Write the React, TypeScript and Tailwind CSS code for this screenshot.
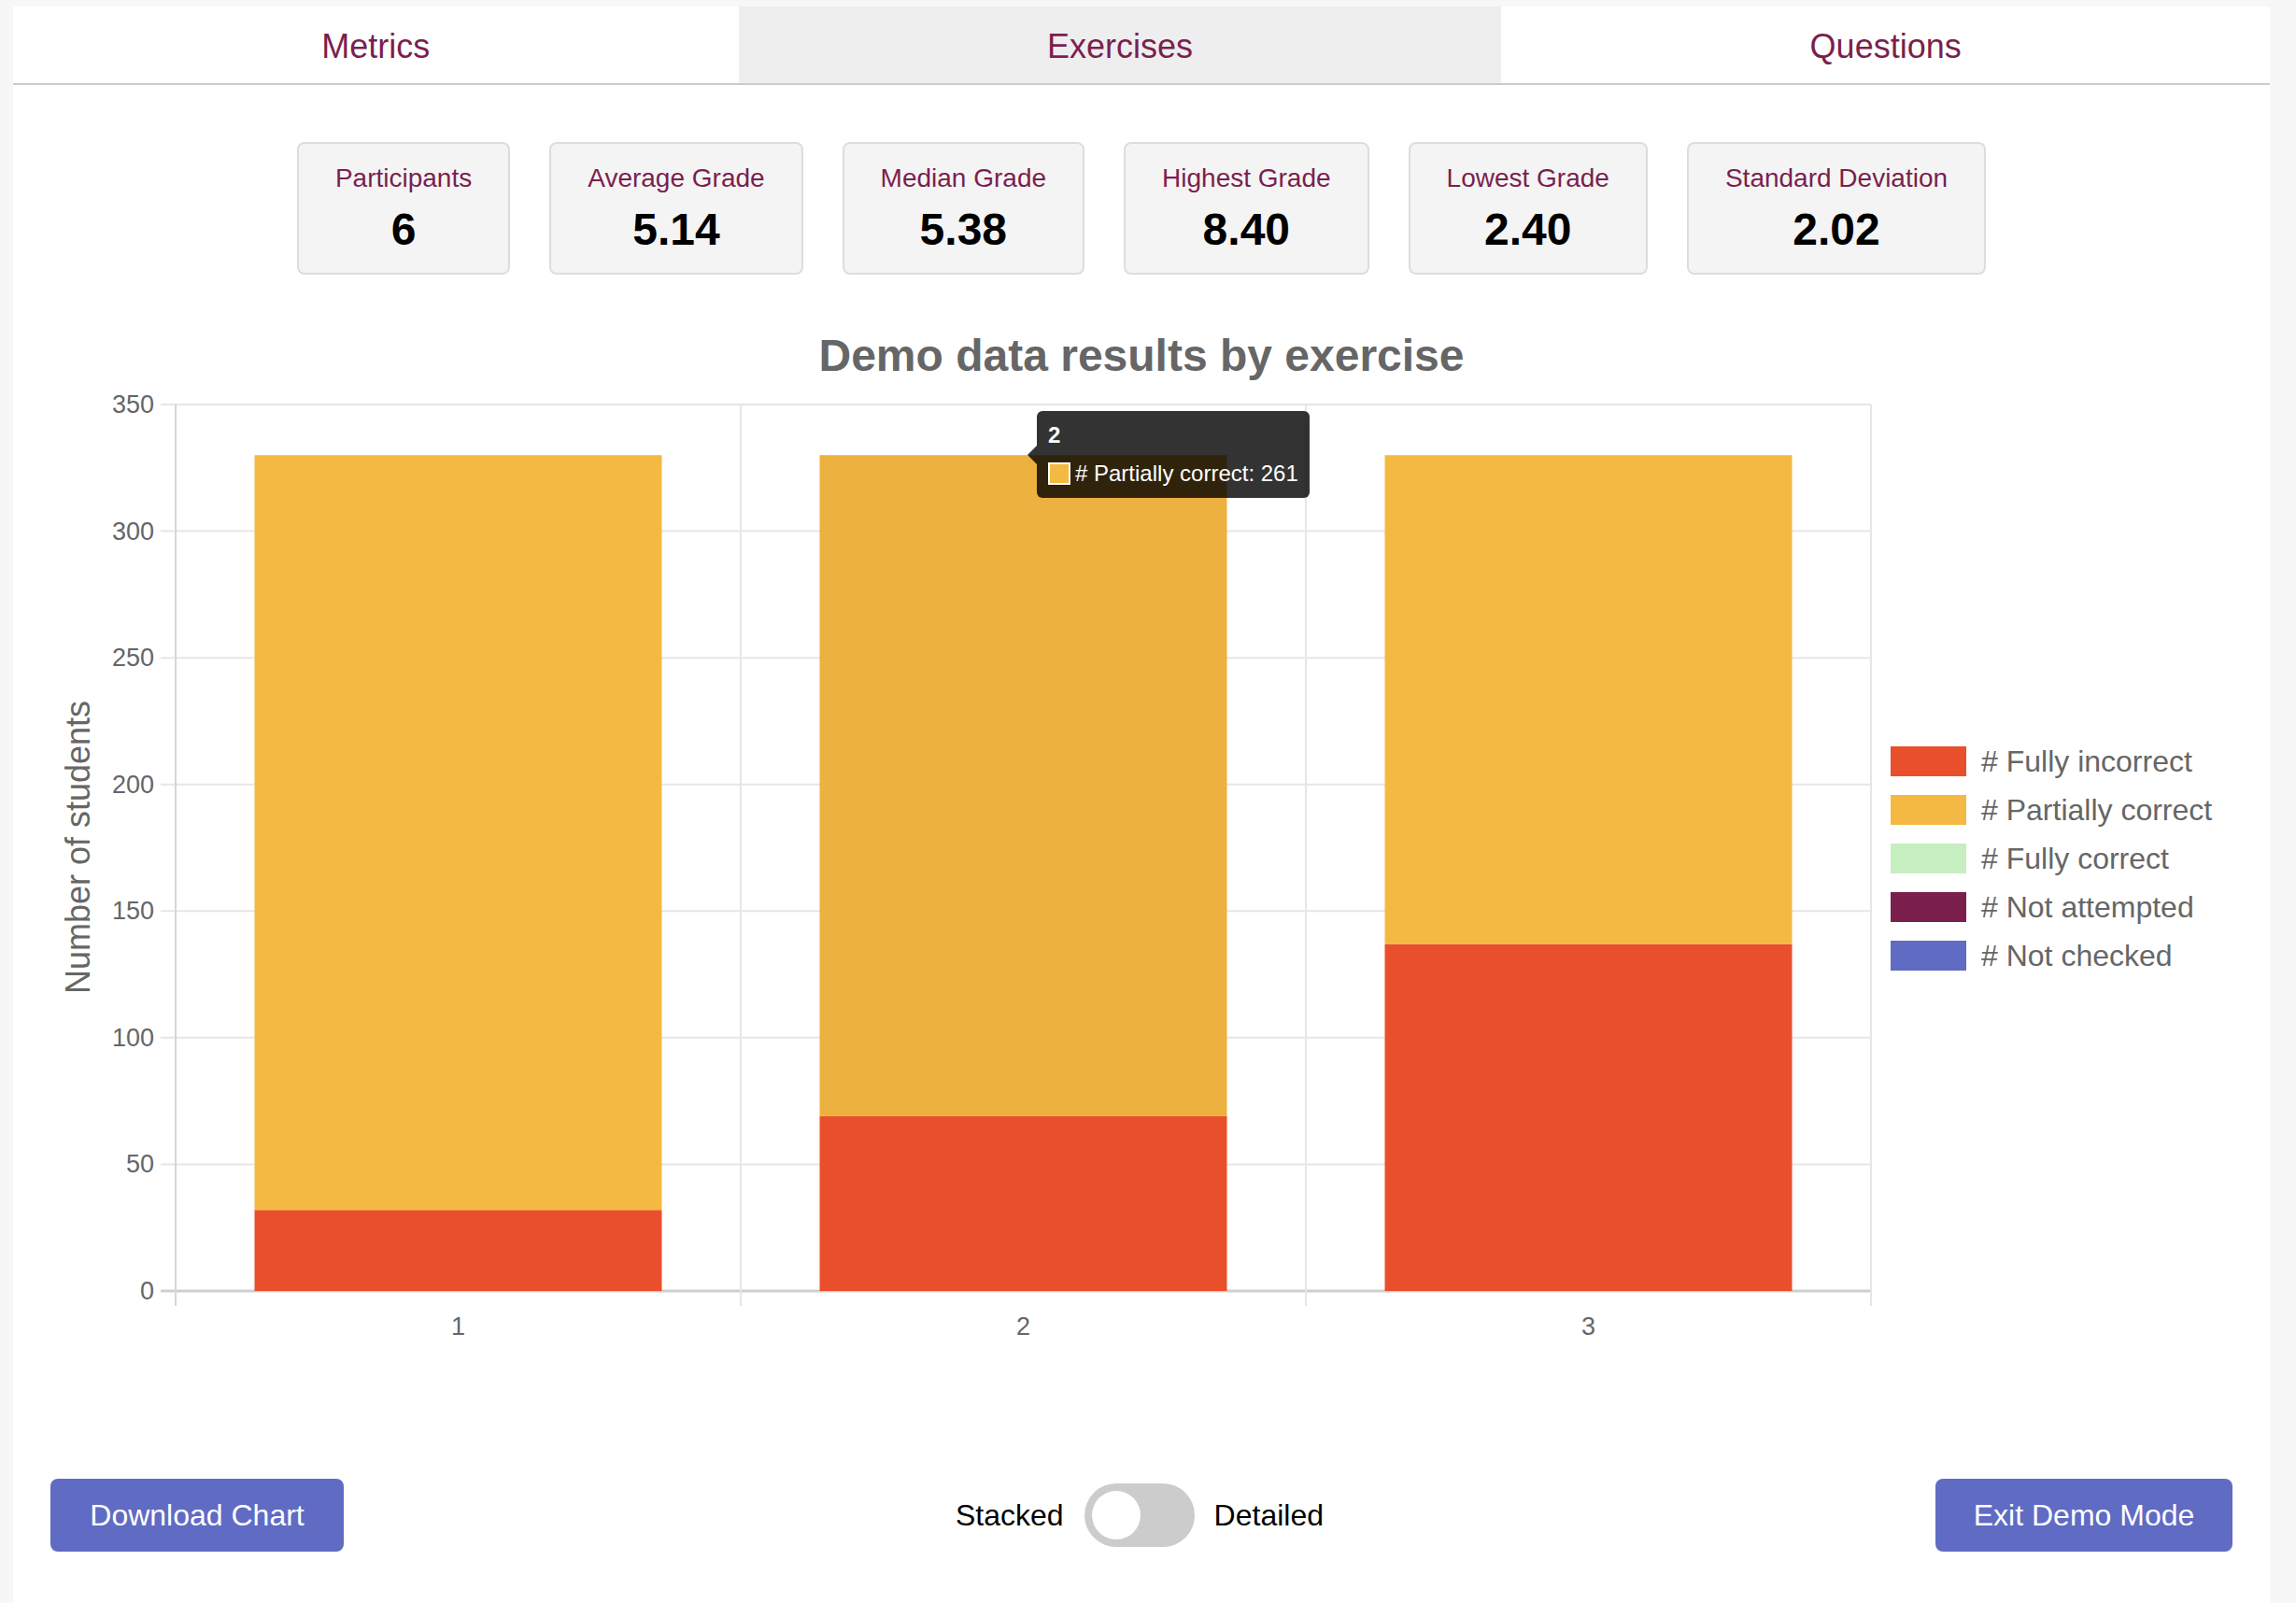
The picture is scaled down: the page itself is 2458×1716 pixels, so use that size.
import React from 'react'

const stats = [
  { label: 'Participants', value: '6' },
  { label: 'Average Grade', value: '5.14' },
  { label: 'Median Grade', value: '5.38' },
  { label: 'Highest Grade', value: '8.40' },
  { label: 'Lowest Grade', value: '2.40' },
  { label: 'Standard Deviation', value: '2.02' },
]

const legend = [
  { label: '# Fully incorrect', color: 'bg-[#e94f2b]' },
  { label: '# Partially correct', color: 'bg-[#f4b942]' },
  { label: '# Fully correct', color: 'bg-[#c6eec0]' },
  { label: '# Not attempted', color: 'bg-[#7b1f4d]' },
  { label: '# Not checked', color: 'bg-[#606bc4]' },
]

// exercise -> [fully incorrect, partially correct]
const bars = [
  { name: '1', incorrect: 32, partial: 298 },
  { name: '2', incorrect: 69, partial: 261, hover: true },
  { name: '3', incorrect: 137, partial: 193 },
]

const PLOT_LEFT = 174
const PLOT_TOP = 24
const PLOT_BOTTOM = 973
const CAT_W = 605
const BAR_W = 436
const UNIT = (PLOT_BOTTOM - PLOT_TOP) / 350
const FONT = 'Liberation Sans, Arial, sans-serif'

function Chart() {
  const ticks = [0, 50, 100, 150, 200, 250, 300, 350]
  const right = PLOT_LEFT + CAT_W * 3
  return (
    <svg width={1996} height={1040} className="shrink-0">
      {/* y axis title */}
      <text
        x={69}
        y={498}
        transform="rotate(-90 69 498)"
        textAnchor="middle"
        dominantBaseline="central"
        fontFamily={FONT}
        fontSize={36}
        fill="#666666"
      >
        Number of students
      </text>

      {/* horizontal grid */}
      {ticks.map((t) => {
        const y = PLOT_BOTTOM - t * UNIT
        return (
          <g key={t}>
            <line x1={PLOT_LEFT - 16} x2={right} y1={y} y2={y} stroke={t === 0 ? '#cfcfcf' : '#e6e6e6'} strokeWidth={t === 0 ? 3 : 2} />
            <text x={151} y={y} textAnchor="end" dominantBaseline="central" fontFamily={FONT} fontSize={27} fill="#666666">
              {t}
            </text>
          </g>
        )
      })}

      {/* vertical grid */}
      {[0, 1, 2, 3].map((i) => {
        const x = PLOT_LEFT + i * CAT_W
        return <line key={i} x1={x} x2={x} y1={PLOT_TOP} y2={PLOT_BOTTOM + 16} stroke={i === 0 ? '#d6d6d6' : '#e6e6e6'} strokeWidth={2} />
      })}

      {/* bars */}
      {bars.map((b, i) => {
        const cx = PLOT_LEFT + CAT_W * i + CAT_W / 2
        const x = cx - BAR_W / 2
        const redH = b.incorrect * UNIT
        const yellowH = b.partial * UNIT
        return (
          <g key={b.name}>
            <rect x={x} y={PLOT_BOTTOM - redH} width={BAR_W} height={redH} fill="#e94f2b" />
            <rect x={x} y={PLOT_BOTTOM - redH - yellowH} width={BAR_W} height={yellowH} fill={b.hover ? '#ecb13f' : '#f4b942'} />
            <text x={cx} y={1011} textAnchor="middle" dominantBaseline="central" fontFamily={FONT} fontSize={27} fill="#666666">
              {b.name}
            </text>
          </g>
        )
      })}
    </svg>
  )
}

export default function App() {
  return (
    <div className="min-h-screen bg-[#f7f7f7] pt-[7px] pl-[14px] pr-[28px] font-['Liberation_Sans',Arial,sans-serif]">
      <div className="bg-white min-h-[1709px] flex flex-col">
        {/* Tabs */}
        <div className="flex border-b-2 border-[#cccccc]">
          <div className="flex-auto h-[82px] pt-[4px] flex items-center justify-center text-[36px] text-[#7b1f4e]">Metrics</div>
          <div className="flex-auto h-[82px] pt-[4px] flex items-center justify-center text-[36px] text-[#7b1f4e] bg-[#eeeeee]">Exercises</div>
          <div className="flex-auto h-[82px] pt-[4px] flex items-center justify-center text-[36px] text-[#7b1f4e]">Questions</div>
        </div>

        {/* Stats */}
        <div className="mt-[61px] flex justify-center gap-[42px]">
          {stats.map((s) => (
            <div key={s.label} className="border-2 border-[#dddddd] rounded-[8px] bg-[#f4f4f4] px-[39px] pt-[21px] pb-[19px] flex flex-col items-center">
              <div className="text-[28px] leading-[32px] text-[#7b1f4e] whitespace-nowrap">{s.label}</div>
              <div className="mt-[11px] text-[48px] leading-[55px] font-bold text-black">{s.value}</div>
            </div>
          ))}
        </div>

        {/* Chart */}
        <div className="mt-[59px] text-center text-[48px] leading-[56px] font-bold text-[#666666]">Demo data results by exercise</div>
        <div className="relative flex">
          <Chart />
          <div className="ml-[14px] mt-[390px] self-start flex flex-col gap-[20px]">
            {legend.map((l) => (
              <div key={l.label} className="flex items-center h-[32px]">
                <div className={`w-[81px] h-[32px] ${l.color}`} />
                <span className="ml-[16px] text-[32px] leading-[32px] text-[#666666] whitespace-nowrap">{l.label}</span>
              </div>
            ))}
          </div>

          {/* Tooltip */}
          <div className="absolute left-[1096px] top-[31px] w-[292px] h-[93px] rounded-[6px] bg-black/80 px-[12px] pt-[12px] text-white">
            <div className="absolute left-[-10px] top-[37px] w-0 h-0 border-y-[10px] border-y-transparent border-r-[10px] border-r-black/80" />
            <div className="text-[24px] leading-[28px] font-bold">2</div>
            <div className="mt-[13px] flex items-center h-[28px]">
              <div className="w-[24px] h-[24px] border-2 border-white bg-[#f4b942]" />
              <span className="ml-[5px] text-[24px] leading-[28px] whitespace-nowrap"># Partially correct: 261</span>
            </div>
          </div>
        </div>

        {/* Controls */}
        <div className="mt-[134px] flex items-center justify-between px-[40px]">
          <button type="button" className="w-[314px] h-[78px] flex items-center justify-center rounded-[8px] bg-[#606bc4] text-white text-[32px]">Download Chart</button>
          <div className="flex items-center text-[32px] text-black">
            <span>Stacked</span>
            <div className="ml-[22px] w-[118px] h-[68px] rounded-full bg-[#cccccc] p-[8px]">
              <div className="w-[52px] h-[52px] rounded-full bg-white" />
            </div>
            <span className="ml-[21px]">Detailed</span>
          </div>
          <button type="button" className="w-[318px] h-[78px] flex items-center justify-center rounded-[8px] bg-[#606bc4] text-white text-[32px]">Exit Demo Mode</button>
        </div>
      </div>
    </div>
  )
}
